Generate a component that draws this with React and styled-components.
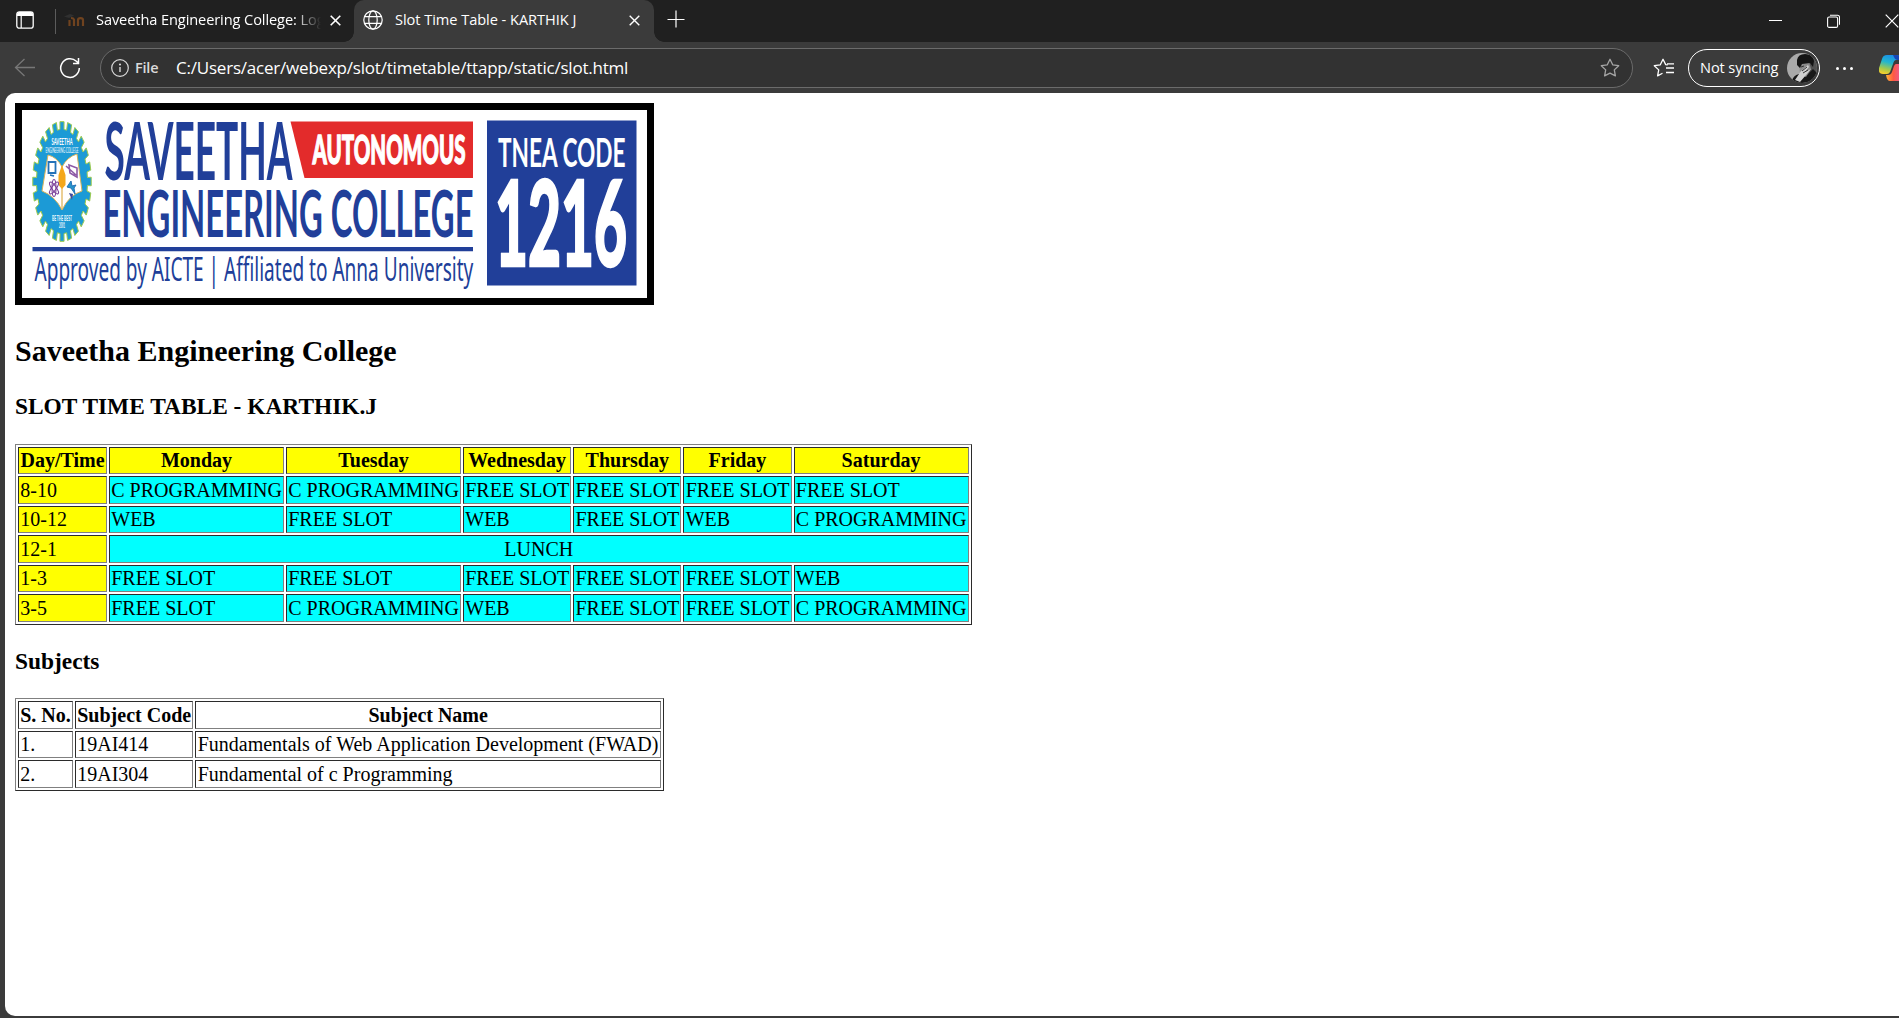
import React, { useLayoutEffect, useRef, useState } from "react";
import styled, { createGlobalStyle } from "styled-components";

const Global = createGlobalStyle`
  html, body { margin: 0; padding: 0; overflow: hidden; background: #3b3b3b; }
  *, *::before, *::after { box-sizing: border-box; }
`;

const Window = styled.div`
  width: 1899px;
  height: 1018px;
  display: flex;
  flex-direction: column;
  overflow: hidden;
  background: #3b3b3b;
  font-family: "Open Sans", "Noto Sans", sans-serif;
  color: #fff;
`;

const TabStrip = styled.div`
  height: 42px;
  flex: none;
  display: flex;
  align-items: stretch;
  background: #202020;
`;

const PaneButton = styled.div`
  width: 55px;
  padding: 11px 0 0 16px;
`;

const Divider = styled.div`
  width: 1px;
  height: 25px;
  margin-top: 9px;
  background: #5c5c5c;
`;

const Tab = styled.div`
  position: relative;
  display: flex;
  align-items: center;
  height: 42px;
  width: ${(p) => p.$width}px;
  padding: 0 0 2px ${(p) => p.$pad}px;
  background: ${(p) => (p.$active ? "#3b3b3b" : "#202020")};
  border-radius: ${(p) => (p.$active ? "10px 10px 0 0" : "0")};
  ${(p) =>
    p.$active &&
    `&::before, &::after {
      content: "";
      position: absolute;
      bottom: 0;
      width: 10px;
      height: 10px;
    }
    &::before { left: -10px; background: radial-gradient(circle at 0 0, transparent 9.5px, #3b3b3b 10px); }
    &::after { right: -10px; background: radial-gradient(circle at 100% 0, transparent 9.5px, #3b3b3b 10px); }`}
`;

const TabTitle = styled.div`
  width: ${(p) => p.$width}px;
  margin-left: ${(p) => p.$gap}px;
  padding-bottom: 3px;
  overflow: hidden;
  white-space: nowrap;
  font-size: 14.6px;
  line-height: 22px;
  letter-spacing: ${(p) => p.$track}px;
  ${(p) => p.$fade && "mask-image: linear-gradient(90deg, #000 88%, transparent 100%);"}
`;

const TabClose = styled.div`
  display: flex;
  margin-left: ${(p) => p.$gap}px;
`;

const NewTab = styled.div`
  padding: 10px 0 0 13px;
`;

const WindowButtons = styled.div`
  display: flex;
  margin-left: auto;
  width: 130px;
  gap: 45px;
  padding-top: 14px;
  svg { flex: none; }
`;

const Toolbar = styled.div`
  height: 51px;
  flex: none;
  display: flex;
  align-items: center;
  padding: 1px 0 0 14px;
  svg { flex: none; }
`;

const Reload = styled.div`
  display: flex;
  width: 41px;
  margin-left: 24px;
`;

const AddressBar = styled.div`
  display: flex;
  align-items: center;
  flex: none;
  width: 1533px;
  height: 40px;
  padding: 0 12px 0 10px;
  border: 1px solid #6b6b6b;
  border-radius: 20px;
  background: #323232;
`;

const Scheme = styled.span`
  width: 41px;
  margin-left: 6px;
  padding-bottom: 1px;
  font-size: 14.5px;
  font-weight: 600;
  letter-spacing: -0.2px;
  color: #dadada;
`;

const Url = styled.span`
  padding-bottom: 2px;
  font-size: 17px;
  letter-spacing: -0.21px;
  white-space: nowrap;
`;

const Star = styled.div`
  display: flex;
  margin-left: auto;
`;

const Favorites = styled.div`
  display: flex;
  margin-left: 20px;
`;

const Profile = styled.div`
  display: flex;
  flex: none;
  align-items: center;
  justify-content: space-between;
  width: 132px;
  height: 38px;
  margin-left: 13px;
  padding: 0 2px 0 11px;
  border: 1.5px solid #fff;
  border-radius: 19px;
  font-size: 14.6px;
  letter-spacing: -0.1px;
  white-space: nowrap;
`;

const ProfileName = styled.span`
  padding-bottom: 2px;
`;

const More = styled.div`
  display: flex;
  gap: 4px;
  margin-left: 16px;
  i {
    width: 3px;
    height: 3px;
    border-radius: 50%;
    background: #fff;
  }
`;

const Copilot = styled.div`
  display: flex;
  width: 20px;
  margin-left: 26px;
  overflow: hidden;
`;

const Page = styled.main`
  height: 923px;
  margin-left: 5px;
  padding: 10px;
  border-radius: 10px 0 0 10px;
  background: #fff;
  color: #000;
  font-family: "Liberation Serif", "Times New Roman", serif;
  font-size: 20px;
  line-height: 23px;
`;

const Banner = styled.div`
  width: 639px;
  height: 202px;
  border: 7px solid #000;
  svg { display: block; }
`;

const Title = styled.h2`
  margin: 29px 0 0;
  font-size: 30px;
  line-height: 34px;
`;

const Heading = styled.h3`
  margin: ${(p) => p.$top}px 0 0;
  font-size: 23.4px;
  line-height: 27px;
`;

const Grid = styled.table`
  width: ${(p) => p.$width}px;
  margin-top: ${(p) => p.$top}px;
  table-layout: fixed;
  border: 1px solid;
  border-color: #808080 #2b2b2b #2b2b2b #808080;
  border-spacing: 2px;
  border-collapse: separate;
  white-space: nowrap;
`;

const cell = `
  height: 27.5px;
  padding: 1.25px;
  border: 1px solid;
  border-color: #2b2b2b #808080 #808080 #2b2b2b;
`;

const Th = styled.th`
  ${cell}
  background: ${(p) => p.$bg || "transparent"};
`;

const Td = styled.td`
  ${cell}
  background: ${(p) => p.$bg || "transparent"};
  text-align: ${(p) => p.$align || "left"};
`;

const Cross = ({ size, width = 1.4 }) => (
  <svg width={size} height={size} viewBox={`0 0 ${size} ${size}`} stroke="#fff" strokeWidth={width}>
    <path d={`M.7 .7L${size - 0.7} ${size - 0.7}M${size - 0.7} .7L.7 ${size - 0.7}`} />
  </svg>
);

const STAR = "M10 1.3l2.7 5.5 6 .9-4.4 4.2 1.1 6L10 15.1l-5.400 2.8 1.1-6L1.3 7.7l6-.9z";

const gear = (n, rx, ry, depth) => {
  const pts = [];
  for (let i = 0; i < n; i++) {
    [[-0.27, 1], [0.27, 1], [0.3, depth], [0.7, depth]].forEach(([o, r]) => {
      const a = ((i + o) / n) * Math.PI * 2;
      pts.push(`${(62 + Math.sin(a) * rx * r).toFixed(2)},${(181.5 - Math.cos(a) * ry * r).toFixed(2)}`);
    });
  }
  return pts.join(" ");
};

// Condenses a line of lettering horizontally so that it fills exactly w units.
const Fit = ({ x, y, w, size, weight = 400, fill = "#213f99", font = "Lato", bold = 0, children }) => {
  const ref = useRef(null);
  const [scale, setScale] = useState(0.6);
  useLayoutEffect(() => {
    const natural = ref.current.getComputedTextLength();
    if (natural) setScale(w / natural);
  }, [w, children]);
  return (
    <text
      ref={ref}
      transform={`translate(${x} ${y}) scale(${scale} 1)`}
      fontFamily={`${font}, sans-serif`}
      fontSize={size}
      fontWeight={weight}
      fill={fill}
      stroke={bold ? fill : "none"}
      strokeWidth={bold}
    >
      {children}
    </text>
  );
};

const CollegeBanner = () => (
  <svg width="625" height="188" viewBox="22 110 625 188">
    <polygon points={gear(24, 29.3, 60, 0.87)} fill="#1c9ad6" stroke="#9ccb4f" strokeWidth="1" />
    <path d="M48 155Q57 157 62 167Q67 157 77 154L82 191Q69 195 62 210Q55 196 42 191Z" fill="#fff" stroke="#d9b45c" strokeWidth="1" />
    <path d="M62 167V209" stroke="#e3bb68" strokeWidth="1.4" />
    <path d="M62 165l3.5 10v10l-3.5 4-3.5-4v-10z" fill="#f4a71c" />
    <path d="M48.500 162h7v11h-7zM50 175l4 1" fill="none" stroke="#2472b8" strokeWidth="1.8" />
    <path d="M66 166l10 9M69 165l8 3v9l-7-4z" fill="none" stroke="#8e5aa6" strokeWidth="1.6" />
    <g fill="none" stroke="#7b3f98" strokeWidth="1.1">
      <ellipse cx="54" cy="188" rx="2" ry="8.500" />
      <ellipse cx="54" cy="188" rx="2.200" ry="7" transform="rotate(35 54 188)" />
      <ellipse cx="54" cy="188" rx="2.200" ry="7" transform="rotate(-35 54 188)" />
    </g>
    <path d="M71 181l-4 6 4 1 4 6-1-6 2-3-4 1z" fill="#2695cb" stroke="#2472b8" />
    <path d="M69 193l3 7 1-6z" fill="#3f4aa0" />
    <Fit x="51.5" y="145" w={21} size={9} weight="700" fill="#fff">SAVEETHA</Fit>
    <Fit x="45.5" y="152.5" w={33} size={7} fill="#fff">ENGINEERING COLLEGE</Fit>
    <Fit x="52" y="221" w={20} size={7} weight="700" fill="#fff">BE THE BEST</Fit>
    <Fit x="59" y="228" w={6} size={7} weight="700" fill="#fff">2001</Fit>

    <Fit x="104.5" y="180" w={188} size={81} weight="700">SAVEETHA</Fit>
    <Fit x="102.5" y="236.7" w={371} size={65.5} weight="700">ENGINEERING COLLEGE</Fit>
    <path d="M290.500 121.500H473V178H304.500z" fill="#e32b2b" />
    <Fit x="312.5" y="163.5" w={153} size={39} weight="900" bold={1.4} fill="#fff">AUTONOMOUS</Fit>
    <path d="M32.500 247H473v4.200H32.500z" fill="#213f99" />
    <Fit x="34.5" y="281" w={439} size={32.5} font="'Noto Sans'">Approved by AICTE | Affiliated to Anna University</Fit>

    <path d="M487 120.500h149.500v165H487z" fill="#213f99" />
    <Fit x="498" y="166.500" w={127.5} size={40} weight="700" fill="#fff">TNEA CODE</Fit>
    <Fit x="495" y="266" w={132} size={118} weight="900" bold={2.5} fill="#fff">1216</Fit>
  </svg>
);

const YELLOW = "#ffff00";
const CYAN = "#00ffff";
const C = "C PROGRAMMING";
const F = "FREE SLOT";
const W = "WEB";

const days = ["Day/Time", "Monday", "Tuesday", "Wednesday", "Thursday", "Friday", "Saturday"];
const dayWidths = [89, 175, 175, 108.2, 108.2, 108.2, 175];
const slots = [
  ["8-10", C, C, F, F, F, F],
  ["10-12", W, F, W, F, W, C],
  ["12-1"],
  ["1-3", F, F, F, F, F, W],
  ["3-5", F, C, W, F, F, C],
];
const subjects = [
  ["1.", "19AI414", "Fundamentals of Web Application Development (FWAD)"],
  ["2.", "19AI304", "Fundamental of c Programming"],
];

export default function App() {
  return (
    <>
      <Global />
      <Window>
        <TabStrip>
          <PaneButton>
            <svg width="18" height="18" viewBox="0 0 18 18" fill="none">
              <rect x=".8" y=".8" width="16.400" height="16.400" rx="2.500" stroke="#fff" strokeWidth="1.300" />
              <path d="M1 3.300A2.300 2.300 0 0 1 3.300 1h11.400A2.300 2.300 0 0 1 17 3.300V5H1z" fill="#fff" />
              <path d="M5.200 4v13" stroke="#fff" strokeWidth="1.200" />
            </svg>
          </PaneButton>
          <Divider />
          <Tab $width={298} $pad={8}>
            <svg width="21" height="16" viewBox="0 0 21 16" fill="none">
              <path d="M0 4.500L6 2l4 1.500-5 2.500z" fill="#303030" />
              <path d="M5.500 14V8M10 14V7.500q-.5-1.500-3-1.500M14 14V8q0-1.800 2.500-1.800T19 8v6" stroke="#70431f" strokeWidth="2.200" />
            </svg>
            <TabTitle $width={225} $gap={11} $track={-0.1} $fade>
              Saveetha Engineering College: Log in
            </TabTitle>
            <TabClose $gap={9}><Cross size={11} width={1.6} /></TabClose>
          </Tab>
          <Tab $active $width={300} $pad={9}>
            <svg width="20" height="20" viewBox="0 0 20 20" fill="none" stroke="#fff" strokeWidth="1.200">
              <circle cx="10" cy="10" r="9.200" />
              <ellipse cx="10" cy="10" rx="4.200" ry="9.200" />
              <path d="M1.500 6.700h17M1.500 13.300h17" />
            </svg>
            <TabTitle $width={224} $gap={12} $track={-0.05}>Slot Time Table - KARTHIK J</TabTitle>
            <TabClose $gap={10}><Cross size={11} /></TabClose>
          </Tab>
          <NewTab>
            <svg width="18" height="18" viewBox="0 0 18 18" stroke="#fff" strokeWidth="1.200">
              <path d="M9 .5v17M.5 9.500h17" />
            </svg>
          </NewTab>
          <WindowButtons>
            <svg width="13" height="14" viewBox="0 0 13 14"><path d="M0 6.500h13" stroke="#fff" /></svg>
            <svg width="13" height="14" viewBox="0 0 13 14" fill="none" stroke="#fff" strokeWidth="1.100">
              <rect x=".6" y="3" width="10" height="10.400" rx="1.500" />
              <path d="M3 1.200h7.500q2 0 2 2v7.500" />
            </svg>
            <Cross size={14} width={1.2} />
          </WindowButtons>
        </TabStrip>

        <Toolbar>
          <svg width="21" height="20" viewBox="0 0 21 20" fill="none" stroke="#777" strokeWidth="1.300">
            <path d="M21 9.500H1.500M10.500 1L1.500 9.500l9 8.500" />
          </svg>
          <Reload>
            <svg width="22" height="22" viewBox="0 0 22 22" fill="none" stroke="#fff" strokeWidth="1.500">
              <path d="M20.300 11A9.300 9.300 0 1 1 17.400 4.300L19.500 6.300M19.500 1v5.500H14" />
            </svg>
          </Reload>
          <AddressBar>
            <svg width="18" height="18" viewBox="0 0 18 18" fill="none" stroke="#dadada" strokeWidth="1.200">
              <circle cx="9" cy="9" r="8.300" />
              <path d="M9 8v5" strokeWidth="1.400" />
              <circle cx="9" cy="5.500" r=".5" />
            </svg>
            <Scheme>File</Scheme>
            <Url>C:/Users/acer/webexp/slot/timetable/ttapp/static/slot.html</Url>
            <Star>
              <svg width="20" height="20" viewBox="0 0 20 20" fill="none" stroke="#a5a5a5" strokeWidth="1.300">
                <path d={STAR} strokeLinejoin="round" />
              </svg>
            </Star>
          </AddressBar>
          <Favorites>
            <svg width="22" height="20" viewBox="0 0 22 20" fill="none" stroke="#fff" strokeWidth="1.300">
              <path d="M14.700 6.800l-2-.2L10 1.300 7.300 6.800l-6 .9L5.700 11.900l-1.100 6L9.500 15.300M13 10h8M13 14.500h8M14 5.800h7" strokeLinejoin="round" />
            </svg>
          </Favorites>
          <Profile>
            <ProfileName>Not syncing</ProfileName>
            <svg width="30" height="30" viewBox="0 0 30 30">
              <defs><clipPath id="face"><circle cx="15" cy="15" r="15" /></clipPath></defs>
              <g clipPath="url(#face)">
                <path d="M0 0h30v30H0z" fill="#a9a9a9" />
                <path d="M22 0h8v30H19z" fill="#515151" />
                <path d="M4 30q2-8 8-9l8 1 6-6 4 4v10z" fill="#181818" />
                <path d="M12 8l10 1 2 7-5 8-6-3z" fill="#8b8b8b" />
                <path d="M10 7Q11 1 18 1q8 0 9 7l-1 6-3-4-8 1-2 4-3-3z" fill="#141414" />
                <path d="M14 18l7-6 1 2-4 5 6-3-5 6-6 7-5-2z" fill="#d0d0d0" />
                <path d="M14 14l3-1M15 18l5-4M16 20l5-3" stroke="#333" />
              </g>
            </svg>
          </Profile>
          <More><i /><i /><i /></More>
          <Copilot>
            <svg width="30" height="26" viewBox="0 0 30 26">
              <defs>
                <linearGradient id="cpA" x1=".6" y1="0" x2=".3" y2="1">
                  <stop offset="0" stopColor="#1b8de8" />
                  <stop offset=".4" stopColor="#22b6cf" />
                  <stop offset=".75" stopColor="#a3c94c" />
                  <stop offset="1" stopColor="#f5cf2d" />
                </linearGradient>
                <linearGradient id="cpB" x1="0" y1="0" x2="1" y2="0">
                  <stop offset="0" stopColor="#ffb331" />
                  <stop offset=".35" stopColor="#ff5a43" />
                  <stop offset="1" stopColor="#d759d8" />
                </linearGradient>
              </defs>
              <path d="M8 0h10q3 0 4 5h-5q-2 0-3 4l-3 8q-1 2-3 2H4q-5 0-4-6L3 4q1-4 5-4z" fill="url(#cpA)" />
              <path d="M14 0h4q3 0 4 5h-3q-3 0-4-3z" fill="#1646b6" />
              <path d="M17 9h11v17H11q-3 0-4-6h2q3 0 4-3l2-6q1-2 2-2z" fill="url(#cpB)" />
            </svg>
          </Copilot>
        </Toolbar>

        <Page>
          <Banner><CollegeBanner /></Banner>
          <Title>Saveetha Engineering College</Title>
          <Heading $top={25}>SLOT TIME TABLE - KARTHIK.J</Heading>
          <Grid $width={956} $top={23.9}>
            <colgroup>{dayWidths.map((w, i) => <col key={i} style={{ width: w }} />)}</colgroup>
            <tbody>
              <tr>{days.map((d) => <Th key={d} $bg={YELLOW}>{d}</Th>)}</tr>
              {slots.map(([time, ...rest]) => (
                <tr key={time}>
                  <Td $bg={YELLOW}>{time}</Td>
                  {rest.length === 0 ? (
                    <Td $bg={CYAN} $align="center" colSpan={6}>LUNCH</Td>
                  ) : (
                    rest.map((s, i) => <Td key={i} $bg={CYAN}>{s}</Td>)
                  )}
                </tr>
              ))}
            </tbody>
          </Grid>
          <Heading $top={23.1}>Subjects</Heading>
          <Grid $width={649} $top={23.4}>
            <colgroup>
              <col style={{ width: 55 }} />
              <col style={{ width: 118.4 }} />
              <col />
            </colgroup>
            <tbody>
              <tr><Th>S. No.</Th><Th>Subject Code</Th><Th>Subject Name</Th></tr>
              {subjects.map((r) => (
                <tr key={r[0]}>{r.map((t) => <Td key={t}>{t}</Td>)}</tr>
              ))}
            </tbody>
          </Grid>
        </Page>
      </Window>
    </>
  );
}
